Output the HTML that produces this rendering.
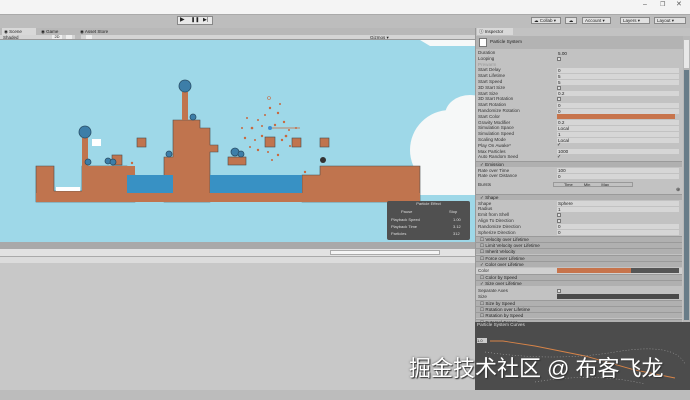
<!DOCTYPE html>
<html><head><meta charset="utf-8"><style>
*{margin:0;padding:0;box-sizing:border-box}
body{width:690px;height:400px;overflow:hidden;background:#c4c4c4;position:relative;font-family:"Liberation Sans",sans-serif;font-size:5px;color:#222}
.a{position:absolute}
.row{position:absolute;left:478px;height:6px;line-height:6px;font-size:4.6px;color:#333;white-space:nowrap}
.val{position:absolute;left:557px;width:122px;height:5px;background:#d6d6d6;font-size:4.6px;line-height:5px;padding-left:1px}
.hdr{position:absolute;left:476px;width:206px;height:6px;background:#b0b0b0;border-top:1px solid #9a9a9a;font-size:4.6px;line-height:5px;padding-left:4px;color:#222}
.chk{display:inline-block;width:4px;height:4px;border:1px solid #777;background:#ddd}
</style></head><body>
<div class="a" style="left:0;top:0;width:690px;height:14px;background:#f4f4f4"></div>
<div class="a" style="left:643px;top:1px;font-size:7px;color:#555">–</div>
<div class="a" style="left:660px;top:1px;font-size:6px;color:#555">❐</div>
<div class="a" style="left:676px;top:0px;font-size:7px;color:#555">✕</div>
<div class="a" style="left:0;top:14px;width:690px;height:14px;background:#bdbdbd;border-top:1px solid #aaa"></div>
<div class="a" style="left:177px;top:16px;width:36px;height:9px;background:#e8e8e8;border:1px solid #888;overflow:hidden"></div>
<div class="a" style="left:180px;top:16.5px;font-size:6px;line-height:7px;color:#222">▶</div>
<div class="a" style="left:191px;top:16.5px;font-size:5px;line-height:7px;color:#222">❚❚</div>
<div class="a" style="left:203px;top:16.5px;font-size:5px;line-height:7px;color:#222">▶|</div>
<div class="a" style="left:531px;top:17px;width:30px;height:7px;background:#e0e0e0;border:1px solid #888;font-size:4.5px;line-height:5px;padding-left:2px">☁ Collab ▾</div>
<div class="a" style="left:565px;top:17px;width:12px;height:7px;background:#e0e0e0;border:1px solid #888;font-size:4.5px;line-height:5px;text-align:center">☁</div>
<div class="a" style="left:582px;top:17px;width:29px;height:7px;background:#e0e0e0;border:1px solid #888;font-size:4.5px;line-height:5px;padding-left:2px">Account ▾</div>
<div class="a" style="left:620px;top:17px;width:30px;height:7px;background:#e0e0e0;border:1px solid #888;font-size:4.5px;line-height:5px;padding-left:2px">Layers ▾</div>
<div class="a" style="left:654px;top:17px;width:32px;height:7px;background:#e0e0e0;border:1px solid #888;font-size:4.5px;line-height:5px;padding-left:2px">Layout ▾</div>
<div class="a" style="left:0;top:28px;width:475px;height:7px;background:#b8b8b8"></div>
<div class="a" style="left:2px;top:28px;width:34px;height:7px;background:#d8d8d8;font-size:4.5px;line-height:7px;padding-left:2px">◉ Scene</div>
<div class="a" style="left:41px;top:28px;font-size:4.5px;line-height:7px">◉ Game</div>
<div class="a" style="left:80px;top:28px;font-size:4.5px;line-height:7px">◉ Asset Store</div>
<div class="a" style="left:0;top:35px;width:475px;height:5px;background:#d4d4d4;border-bottom:1px solid #999"></div>
<div class="a" style="left:3px;top:34.5px;font-size:4.5px;line-height:6px">Shaded</div>
<div class="a" style="left:52px;top:35px;width:10px;height:4px;background:#eee;font-size:4px;line-height:4px;text-align:center">2D</div>
<div class="a" style="left:66px;top:35px;width:6px;height:4px;background:#eee"></div>
<div class="a" style="left:75px;top:35px;width:6px;height:4px;background:#bbb"></div>
<div class="a" style="left:86px;top:35px;width:6px;height:4px;background:#eee"></div>
<div class="a" style="left:370px;top:34.5px;font-size:4.5px;line-height:6px">Gizmos ▾</div>
<svg class="a" style="left:0;top:40px" width="475" height="202" viewBox="0 40 475 202">
<rect x="0" y="40" width="475" height="202" fill="#9ed8e8"/>
<path d="M420 40 H475 V46 H430 Z" fill="#f6f8f8"/>
<ellipse cx="450" cy="150" rx="40" ry="40" fill="#f6f8f8"/>
<ellipse cx="470" cy="115" rx="25" ry="20" fill="#f6f8f8"/>
<rect x="420" y="125" width="55" height="70" fill="#f6f8f8"/>
<g fill="#c0744e" stroke="#4a4a4a" stroke-width="0.6">
<path d="M36 166 H54 V191 H82 V166 H127 V175 H135 V202 H36 Z"/>
<path d="M82 166 H135 V202 H82 Z" stroke="none"/>
<path d="M164 157 H173 V120 H200 V128 H210 V145 H218 V152 H210 V202 H164 Z"/>
<path d="M302 175 H320 V166 H420 V202 H302 Z"/>
<rect x="36" y="193" width="384" height="9" stroke="none"/>
<rect x="137" y="138" width="9" height="9"/>
<rect x="228" y="157" width="18" height="8"/>
<rect x="265" y="137" width="10" height="10"/>
<rect x="292" y="138" width="9" height="9"/>
<rect x="320" y="138" width="9" height="9"/>
<rect x="112" y="155" width="10" height="10"/>
</g>
<rect x="127" y="175" width="46" height="18" fill="#3891c4"/>
<rect x="210" y="175" width="92" height="18" fill="#3891c4"/>
<rect x="56" y="187" width="24" height="4" fill="#fff"/>
<g fill="#c0744e"><rect x="82" y="138" width="6" height="28"/><rect x="182" y="92" width="6" height="28"/></g>
<g fill="#3d7ea8" stroke="#2a4e66" stroke-width="0.8">
<circle cx="85" cy="132" r="6"/><circle cx="185" cy="86" r="6"/>
<circle cx="88" cy="162" r="3"/><circle cx="108" cy="161" r="3"/><circle cx="113" cy="162" r="3"/>
<circle cx="193" cy="117" r="3"/><circle cx="169" cy="154" r="3"/><circle cx="235" cy="152" r="4"/><circle cx="241" cy="154" r="3"/>
</g>
<circle cx="323" cy="160" r="3" fill="#333"/>
<rect x="92" y="139" width="9" height="7" fill="#fff"/>
<g fill="#c8683e">
<circle cx="270" cy="108" r="1.2"/><circle cx="265" cy="115" r="1"/><circle cx="278" cy="113" r="1.2"/><circle cx="258" cy="120" r="1"/><circle cx="284" cy="122" r="1.2"/><circle cx="247" cy="118" r="1"/><circle cx="252" cy="128" r="1.3"/><circle cx="262" cy="126" r="1"/><circle cx="275" cy="125" r="1.2"/><circle cx="289" cy="130" r="1"/><circle cx="245" cy="138" r="1.2"/><circle cx="255" cy="140" r="1"/><circle cx="282" cy="140" r="1.2"/><circle cx="290" cy="146" r="1"/><circle cx="258" cy="150" r="1.2"/><circle cx="268" cy="152" r="1"/><circle cx="278" cy="155" r="1.2"/><circle cx="272" cy="160" r="1"/><circle cx="250" cy="147" r="1"/><circle cx="242" cy="128" r="1"/><circle cx="296" cy="128" r="1"/><circle cx="286" cy="136" r="1.3"/><circle cx="262" cy="136" r="1.2"/><circle cx="280" cy="104" r="1"/><circle cx="305" cy="172" r="1.2"/><circle cx="132" cy="163" r="1.2"/>
</g>
<circle cx="270" cy="128" r="2" fill="#3b8ed0"/>
<line x1="272" y1="128" x2="300" y2="128" stroke="#c8683e" stroke-width="0.8"/>
<circle cx="269" cy="98" r="1.5" fill="none" stroke="#c8683e" stroke-width="0.6"/>
</svg>
<div class="a" style="left:387px;top:201px;width:83px;height:39px;background:#505050;border-radius:2px;color:#ddd;font-size:4px">
<div style="text-align:center;line-height:5px">Particle Effect</div>
<div style="position:absolute;left:14px;top:8px">Pause</div><div style="position:absolute;left:62px;top:8px">Stop</div>
<div style="position:absolute;left:4px;top:16px">Playback Speed</div><div style="position:absolute;left:66px;top:16px">1.00</div>
<div style="position:absolute;left:4px;top:23px">Playback Time</div><div style="position:absolute;left:66px;top:23px">3.12</div>
<div style="position:absolute;left:4px;top:30px">Particles</div><div style="position:absolute;left:66px;top:30px">312</div>
</div>
<div class="a" style="left:0;top:242px;width:475px;height:7px;background:#a9a9a9"></div>
<div class="a" style="left:0;top:249px;width:475px;height:8px;background:#e2e2e2;border-bottom:1px solid #aaa"></div>
<div class="a" style="left:330px;top:250px;width:110px;height:5px;background:#f4f4f4;border:1px solid #aaa"></div>
<div class="a" style="left:0;top:257px;width:475px;height:6px;background:#dcdcdc"></div>
<div class="a" style="left:0;top:263px;width:475px;height:127px;background:#c8c8c8"></div>
<div class="a" style="left:0;top:390px;width:690px;height:10px;background:#bcbcbc"></div>
<div class="a" style="left:475px;top:28px;width:215px;height:294px;background:#c2c2c2;border-left:1px solid #999"></div>
<div class="a" style="left:477px;top:28px;width:36px;height:7px;background:#d8d8d8;font-size:4.5px;line-height:7px;padding-left:2px">ⓘ Inspector</div>
<div class="a" style="left:476px;top:36px;width:207px;height:13px;background:#b3b3b3"></div>
<div class="a" style="left:479px;top:38px;width:8px;height:9px;background:#fff;border:1px solid #777"></div>
<div class="a" style="left:490px;top:39px;font-size:4.6px">Particle System</div>
<div class="a" style="left:683px;top:36px;width:7px;height:286px;background:#b8b8b8"></div>
<div class="a" style="left:684px;top:40px;width:5px;height:28px;background:#e8e8e8"></div>
<div class="a" style="left:684px;top:70px;width:5px;height:250px;background:#687c88"></div>

<div class="row" style="top:50px">Duration</div><div class="val" style="top:50.5px;background:none">5.00</div>
<div class="row" style="top:55.8px">Looping</div><div class="a" style="left:557px;top:56.5px"><span class="chk"></span></div>
<div class="row" style="top:61.6px;color:#999">Prewarm</div>
<div class="row" style="top:67.4px">Start Delay</div><div class="val" style="top:68px">0</div>
<div class="row" style="top:73.2px">Start Lifetime</div><div class="val" style="top:73.8px">5</div>
<div class="row" style="top:79px">Start Speed</div><div class="val" style="top:79.6px">5</div>
<div class="row" style="top:84.8px">3D Start Size</div><div class="a" style="left:557px;top:85.5px"><span class="chk"></span></div>
<div class="row" style="top:90.6px">Start Size</div><div class="val" style="top:91.2px">0.2</div>
<div class="row" style="top:96.4px">3D Start Rotation</div><div class="a" style="left:557px;top:97px"><span class="chk"></span></div>
<div class="row" style="top:102.2px">Start Rotation</div><div class="val" style="top:102.8px">0</div>
<div class="row" style="top:108px">Randomize Rotation</div><div class="val" style="top:108.6px">0</div>
<div class="row" style="top:113.8px">Start Color</div><div class="val" style="top:114px;background:#c7744c;width:118px;height:5px"></div>
<div class="row" style="top:119.6px">Gravity Modifier</div><div class="val" style="top:120.2px">0.2</div>
<div class="row" style="top:125.4px">Simulation Space</div><div class="val" style="top:126px">Local</div>
<div class="row" style="top:131.2px">Simulation Speed</div><div class="val" style="top:131.8px">1</div>
<div class="row" style="top:137px">Scaling Mode</div><div class="val" style="top:137.6px">Local</div>
<div class="row" style="top:142.8px">Play On Awake*</div><div class="a" style="left:557px;top:142px;font-size:5px">✓</div>
<div class="row" style="top:148.6px">Max Particles</div><div class="val" style="top:149.2px">1000</div>
<div class="row" style="top:154.4px">Auto Random Seed</div><div class="a" style="left:557px;top:153.5px;font-size:5px">✓</div>
<div class="hdr" style="top:160.5px">✓ Emission</div>
<div class="row" style="top:167.5px">Rate over Time</div><div class="val" style="top:168px">100</div>
<div class="row" style="top:173.3px">Rate over Distance</div><div class="val" style="top:173.8px">0</div>
<div class="row" style="top:182px">Bursts</div>
<div class="a" style="left:553px;top:182px;width:80px;height:5px;border:1px solid #999;font-size:4px;line-height:3px;word-spacing:10px;padding-left:10px">Time Min Max</div>
<div class="a" style="left:676px;top:187px;font-size:5px">⊕</div>
<div class="hdr" style="top:194px">✓ Shape</div>
<div class="row" style="top:200.5px">Shape</div><div class="val" style="top:201px">Sphere</div>
<div class="row" style="top:206.3px">Radius</div><div class="val" style="top:206.8px">1</div>
<div class="row" style="top:212.1px">Emit from Shell</div><div class="a" style="left:557px;top:213px"><span class="chk"></span></div>
<div class="row" style="top:217.9px">Align To Direction</div><div class="a" style="left:557px;top:218.5px"><span class="chk"></span></div>
<div class="row" style="top:223.7px">Randomize Direction</div><div class="val" style="top:224.2px">0</div>
<div class="row" style="top:229.5px">Spherize Direction</div><div class="val" style="top:230px">0</div>
<div class="hdr" style="top:236px">☐ Velocity over Lifetime</div>
<div class="hdr" style="top:242.2px">☐ Limit Velocity over Lifetime</div>
<div class="hdr" style="top:248.4px">☐ Inherit Velocity</div>
<div class="hdr" style="top:254.6px">☐ Force over Lifetime</div>
<div class="hdr" style="top:260.8px">✓ Color over Lifetime</div>
<div class="row" style="top:267.5px;left:476px;width:206px;background:#d0d0d0;padding-left:2px">Color</div>
<div class="a" style="left:557px;top:268px;width:74px;height:5px;background:#c7744c"></div>
<div class="a" style="left:631px;top:268px;width:48px;height:5px;background:#555"></div>
<div class="hdr" style="top:274px">☐ Color by Speed</div>
<div class="hdr" style="top:280.2px">✓ Size over Lifetime</div>
<div class="row" style="top:287.5px">Separate Axes</div><div class="a" style="left:557px;top:288.5px"><span class="chk"></span></div>
<div class="row" style="top:293.5px">Size</div><div class="a" style="left:557px;top:294px;width:122px;height:5px;background:#4a4a4a"></div>
<div class="hdr" style="top:300px">☐ Size by Speed</div>
<div class="hdr" style="top:306.2px">☐ Rotation over Lifetime</div>
<div class="hdr" style="top:312.4px">☐ Rotation by Speed</div>
<div class="hdr" style="top:318.6px;height:4px">☐ External Forces</div>
<div class="a" style="left:475px;top:322px;width:215px;height:68px;background:#4c4c4c"></div>
<div class="a" style="left:477px;top:322px;font-size:4.6px;color:#ddd;line-height:6px">Particle System Curves</div>
<div class="a" style="left:477px;top:338px;width:10px;height:5px;background:#ccc;font-size:4px;line-height:5px">1.0</div>
<svg class="a" style="left:475px;top:322px" width="215" height="68">
<path d="M15 19 H28 L60 24 L110 34 L160 48 L200 56" stroke="#d88448" stroke-width="0.9" fill="none"/>
<path d="M10 30 Q80 40 140 30 T210 42" stroke="#bbb" stroke-width="0.5" stroke-dasharray="1 2" fill="none"/>
<path d="M60 60 Q120 50 170 62" stroke="#bbb" stroke-width="0.5" stroke-dasharray="1 2" fill="none"/>
</svg>
<div class="a" style="left:409px;top:355px;font-family:'Liberation Sans','Noto Sans CJK SC',sans-serif;font-size:22px;line-height:28px;color:#fff;text-shadow:1px 1px 1px #333,0 0 2px #555;white-space:nowrap">掘金技术社区 @ 布客飞龙</div>
</body></html>
